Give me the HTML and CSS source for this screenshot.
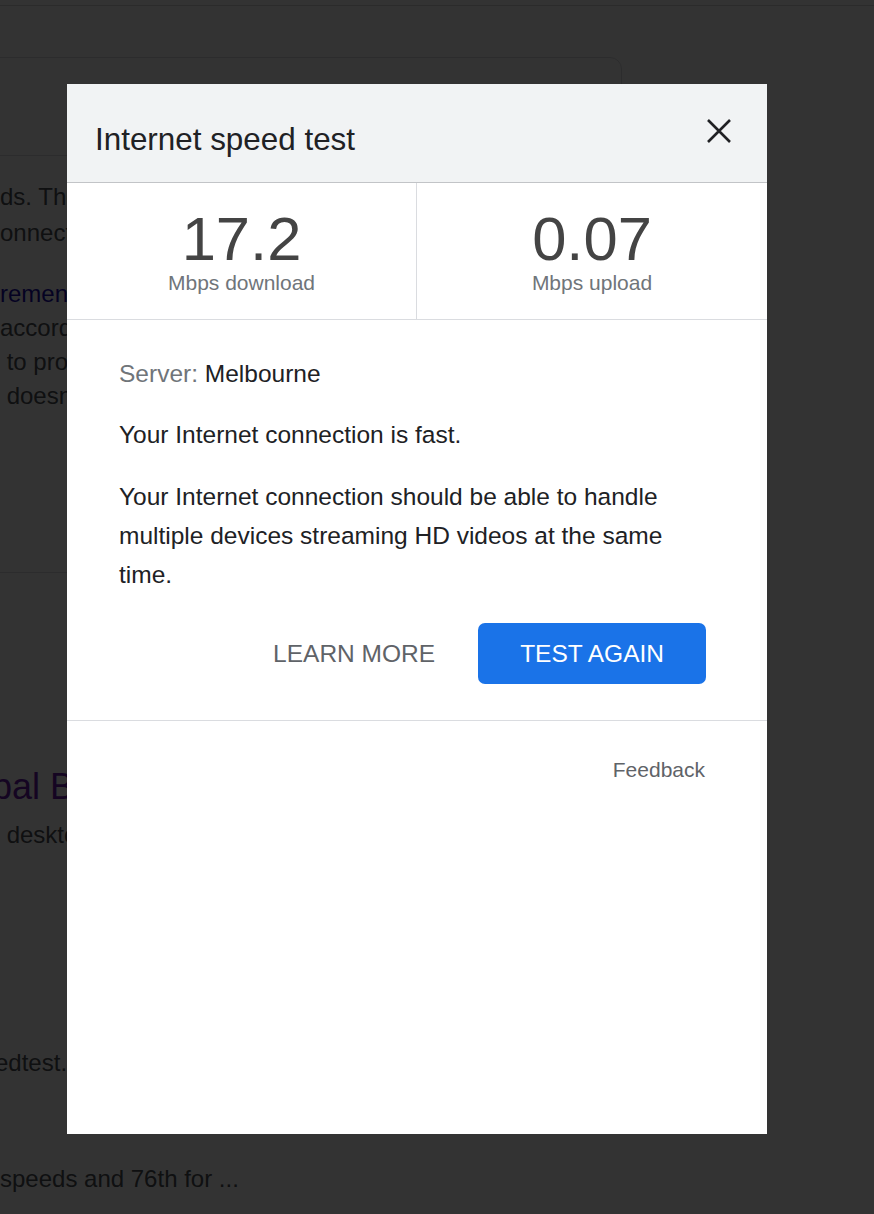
FILE: index.html
```html
<!DOCTYPE html>
<html lang="en">
<head>
<meta charset="utf-8">
<title>Internet speed test</title>
<link rel="stylesheet" href="styles.css">
</head>
<body>
<div class="topbar"></div>
<div class="page">
  <div class="card"></div>
  <div class="snip p1">
    <span class="ln">ds. The test usually takes less than 30 seconds</span>
    <span class="ln">onnection speeds</span>
  </div>
  <div class="snip p2">
    <span class="ln link">rements are approximate</span>
    <span class="ln">according to your provider</span>
    <span class="ln">&nbsp;to provide an estimate</span>
    <span class="ln">&nbsp;doesn't share your data</span>
  </div>
  <div class="rule"></div>
  <div class="rtitle">pal Broadband Speeds</div>
  <div class="snip p3">s desktop and mobile</div>
  <div class="snip p4">edtest.net</div>
  <div class="snip p5">speeds and 76th for ...</div>
</div>

<div class="overlay"></div>

<div class="dialog" role="dialog" aria-label="Internet speed test">
  <div class="dlg-head">
    <h2 class="dlg-title">Internet speed test</h2>
    <svg class="close" viewBox="0 0 24 24" width="24" height="24" aria-label="Close">
      <path d="M1 1 L23 23 M23 1 L1 23" stroke="#202124" stroke-width="2.6" fill="none"/>
    </svg>
  </div>
  <div class="stats">
    <div class="stat">
      <div class="num">17.2</div>
      <div class="unit">Mbps download</div>
    </div>
    <div class="stat">
      <div class="num">0.07</div>
      <div class="unit">Mbps upload</div>
    </div>
  </div>
  <div class="dlg-body">
    <p class="para"><span class="label">Server:</span> Melbourne</p>
    <p class="para gap1">Your Internet connection is fast.</p>
    <p class="para gap2">Your Internet connection should be able to handle multiple devices streaming HD videos at the same time.</p>
    <div class="actions">
      <button class="btn">LEARN MORE</button>
      <button class="btn btn-primary">TEST AGAIN</button>
    </div>
  </div>
  <div class="dlg-foot">Feedback</div>
</div>
</body>
</html>
```

FILE: styles.css
```css
html, body {
  margin: 0;
  background: #ffffff;
}
body {
  font-family: "Liberation Sans", Arial, sans-serif;
  overflow: hidden;
  height: 1214px;
}

/* underlying page */
.topbar {
  height: 5px;
  border-bottom: 1px solid #d4d4d4;
}
.page {
  width: 640px;
  overflow: hidden;
}
.card {
  margin-top: 51px;
  margin-left: -30px;
  width: 652px;
  height: 99px;
  box-sizing: border-box;
  border: 1px solid #dadce0;
  border-radius: 12px;
}
.snip {
  font-size: 24px;
  color: #4d5156;
  white-space: nowrap;
}
.snip .ln {
  display: block;
}
.snip .link {
  color: #1a0dab;
}
.p1 {
  margin-top: 23px;
  line-height: 36px;
}
.p2 {
  margin-top: 26px;
  line-height: 34px;
}
.rule {
  margin-top: 159px;
  border-top: 1px solid #dadce0;
}
.rtitle {
  margin-top: 192px;
  margin-left: -8px;
  font-size: 36px;
  line-height: 44px;
  color: #681da8;
  white-space: nowrap;
}
.p3 {
  margin-top: 8px;
  margin-left: -12px;
  line-height: 36px;
}
.p4 {
  margin-top: 192px;
  margin-left: -5px;
  line-height: 36px;
}
.p5 {
  margin-top: 80px;
  line-height: 36px;
}

/* overlay + dialog */
.overlay {
  position: fixed;
  inset: 0;
  background: rgba(0, 0, 0, 0.8);
}
.dialog {
  position: fixed;
  left: 67px;
  top: 84px;
  width: 700px;
  height: 1050px;
  background: #ffffff;
  display: flex;
  flex-direction: column;
}
.dlg-head {
  height: 99px;
  box-sizing: border-box;
  background: #f1f3f4;
  border-bottom: 1px solid #c2c4c7;
  display: flex;
  justify-content: space-between;
  align-items: flex-start;
  padding: 0 36px 0 28px;
}
.dlg-title {
  margin: 38px 0 0;
  font-size: 31.4px;
  line-height: 36px;
  font-weight: normal;
  color: #202124;
}
.close {
  margin-top: 35px;
  display: block;
}

.stats {
  display: grid;
  grid-template-columns: 1fr 1fr;
  border-bottom: 1px solid #dadce0;
}
.stat {
  padding: 26px 0 23px;
  text-align: center;
}
.stat:first-child {
  border-right: 1px solid #dadce0;
}
.num {
  font-size: 61.5px;
  line-height: 60px;
  color: #444444;
}
.unit {
  margin-top: 1px;
  font-size: 21px;
  line-height: 26px;
  color: #70757a;
}

.dlg-body {
  padding: 34px 61px 36px 52px;
  border-bottom: 1px solid #dadce0;
  font-size: 24.5px;
  line-height: 39px;
  color: #202124;
}
.para {
  margin: 0;
}
.gap1 {
  margin-top: 22px;
}
.gap2 {
  margin-top: 23px;
}
.label {
  color: #70757a;
}
.actions {
  display: flex;
  justify-content: flex-end;
  gap: 1px;
  margin-top: 29px;
}
.btn {
  height: 61px;
  padding: 0 42px;
  border: 0;
  border-radius: 7px;
  background: transparent;
  font-family: "Liberation Sans", Arial, sans-serif;
  font-size: 24.5px;
  line-height: 61px;
  color: #5f6368;
}
.btn-primary {
  background: #1a73e8;
  color: #ffffff;
}

.dlg-foot {
  padding: 36px 62px 0 0;
  text-align: right;
  font-size: 21px;
  line-height: 26px;
  color: #5f6368;
}
```
